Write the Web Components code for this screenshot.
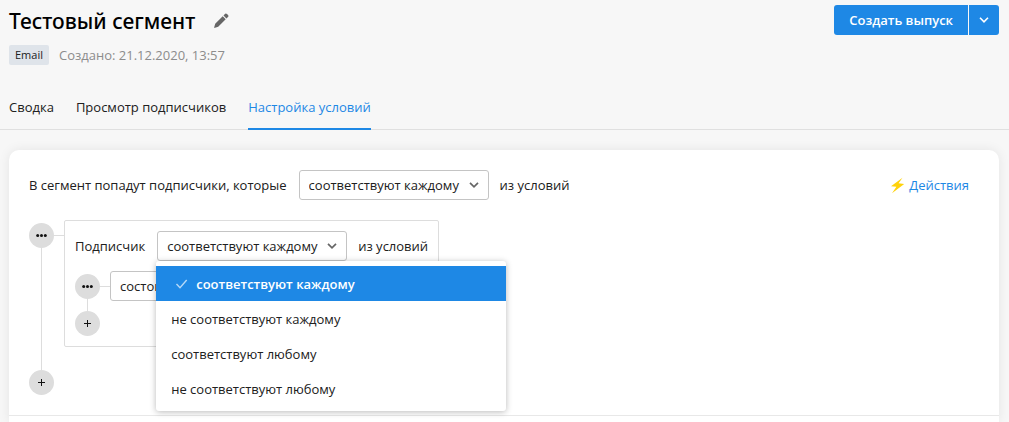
<!DOCTYPE html>
<html lang="ru">
<head>
<meta charset="utf-8">
<meta name="viewport" content="width=device-width, initial-scale=1">
<title>Тестовый сегмент</title>
<style>
html { background: #f7f7f7; }
body {
  margin: 0;
  color: #202020;
  font: 13px/20px "Open Sans", "Noto Sans", sans-serif;
}
</style>
</head>
<body>
<segment-page></segment-page>

<script>
const define = (name, html, setup) => {
  const template = document.createElement('template');
  template.innerHTML = html;
  customElements.define(name, class extends HTMLElement {
    constructor() {
      super();
      this.attachShadow({ mode: 'open' }).append(template.content.cloneNode(true));
    }
    connectedCallback() { if (setup) setup(this, this.shadowRoot); }
  });
};

/* Drop-down; the choices come from the "options" attribute, split by "|" */
define('ui-select', `
<style>
  :host { display: block; }
  label { display: flex; align-items: center; gap: 12px; white-space: nowrap; }
  label span:empty { display: none; }
  .box { position: relative; flex: none; width: 190px; }
  select {
    box-sizing: border-box; display: block; width: 100%; height: 30px; margin: 0;
    padding: 0 20px 0 9px; border: 1px solid #c4c4c4; border-radius: 3px;
    background: #fff; color: inherit; font: inherit; appearance: none; outline: 0;
  }
  svg { position: absolute; right: 10px; top: 11px; pointer-events: none; }
</style>
<label><span></span>
  <div class="box"><select></select>
    <svg width="10" height="8" viewBox="0 0 10 8" fill="none" stroke="#666" stroke-width="1.7"><path d="M1 1.8 5 5.8 9 1.8"/></svg>
    <slot name="menu"></slot>
  </div>
</label>`, (host, root) => {
  root.querySelector('span').textContent = host.getAttribute('label') || '';
  const select = root.querySelector('select');
  if (!host.getAttribute('label')) select.setAttribute('aria-label', host.getAttribute('name'));
  select.replaceChildren(...host.getAttribute('options').split('|').map(t => new Option(t)));
});

define('ui-menu', `
<style>
  :host {
    position: absolute; z-index: 5; top: 30px; left: -1px; box-sizing: border-box;
    width: 350px; padding: 5px 0; background: #fff; border-radius: 3px;
    box-shadow: 0 1px 6px rgba(0,0,0,.28);
  }
</style><slot></slot>`, host => host.setAttribute('role', 'listbox'));

define('ui-option', `
<style>
  :host { display: flex; align-items: center; gap: 8px; height: 35px; padding: 0 15px; }
  :host([selected]) { background: #1e88e5; color: #fff; font-weight: 600; padding: 0 19px; }
  svg { display: none; }
  :host([selected]) svg { display: block; }
</style>
<svg width="13" height="12" viewBox="0 0 13 12" fill="none" stroke="#b5d8f7" stroke-width="1.4"><path d="M1.5 6 5 9.7 11.7 2"/></svg>
<span><slot></slot></span>`, host => host.setAttribute('role', 'option'));

define('round-button', `
<style>
  :host { display: block; flex: none; }
  button {
    display: grid; place-items: center; width: 25px; height: 25px; padding: 0;
    border: 0; border-radius: 50%; background: #ddd; color: #111;
  }
  svg { display: none; }
  :host([kind=more]) .more, :host([kind=add]) .add { display: block; }
</style>
<button type="button">
  <svg class="more" width="11" height="5" viewBox="0 0 11 5" fill="currentColor"><circle cx="1.7" cy="2.5" r="1.5"/><circle cx="5.5" cy="2.5" r="1.5"/><circle cx="9.3" cy="2.5" r="1.5"/></svg>
  <svg class="add" width="7" height="7" viewBox="0 0 7 7" stroke="currentColor"><path d="M3.5 0V7M0 3.5H7"/></svg>
</button>`, (host, root) => root.querySelector('button')
  .setAttribute('aria-label', host.getAttribute('kind') === 'add' ? 'Добавить' : 'Ещё'));

/* A branch: round menu button, connector, slotted content, then an add button */
define('condition-branch', `
<style>
  :host { display: grid; grid-template-columns: 25px 10px max-content; --lead: 3px; --tail: 23px; }
  :host([nested]) { --tail: 10px; }
  .rail { display: flex; flex-direction: column; align-items: center; padding-top: var(--lead); }
  .line { flex: 1; width: 1px; background: #ddd; }
  .link { height: 1px; margin-top: 15px; background: #ddd; }
  .body { padding-bottom: var(--tail); }
</style>
<div class="rail"><round-button kind="more"></round-button><div class="line"></div></div>
<div class="link"></div>
<div class="body"><slot></slot></div>
<round-button kind="add"></round-button>`);

define('condition-group', `
<style>
  :host { display: block; padding: 10px; border: 1px solid #ddd; border-radius: 2px; }
</style><slot></slot>`);

define('page-heading', `
<style>
  :host { display: flex; justify-content: space-between; align-items: flex-start; padding: 5px 10px 0 9px; }
  .title { display: flex; align-items: center; gap: 17px; height: 32px; }
  h1 { margin: 0; font: 500 21px/32px "Noto Sans", "Open Sans", sans-serif; color: #000; }
  .edit { display: block; padding: 0; border: 0; background: none; }
  .edit svg, .create svg { display: block; }
  .meta { display: flex; align-items: center; gap: 10px; margin-top: 8px; color: #8c8c8c; }
  .tag { padding: 0 6px; border-radius: 2px; background: #dfe4ea; color: #202020; font-size: 11px; }
  .create { display: flex; gap: 1px; }
  .create button {
    height: 30px; border: 0; background: #1e88e5; color: #fff; font: inherit; font-weight: 600;
    padding: 0 15px; border-radius: 3px 0 0 3px;
  }
  .create .more { padding: 0 10px; border-radius: 0 3px 3px 0; }
</style>
<div>
  <div class="title"><h1>Тестовый сегмент</h1>
    <button class="edit" type="button" aria-label="Переименовать">
      <svg width="18" height="18" viewBox="0 0 18 18" fill="#666"><path d="M2 16 3.2 11.8 10.7 4.3 13.7 7.3 6.2 14.8ZM11.5 3.5 13.2 1.8Q14 1 15 2L16 3Q17 4 16.2 4.8L14.5 6.5Z"/></svg>
    </button>
  </div>
  <div class="meta"><span class="tag">Email</span><span>Создано: 21.12.2020, 13:57</span></div>
</div>
<div class="create">
  <button type="button">Создать выпуск</button>
  <button class="more" type="button" aria-label="Другие действия">
    <svg width="10" height="8" viewBox="0 0 10 8" fill="none" stroke="#fff" stroke-width="1.6"><path d="M1 1.8 5 5.8 9 1.8"/></svg>
  </button>
</div>`);

define('page-tabs', `
<style>
  :host { display: block; margin-top: 22px; padding-left: 9px; border-bottom: 1px solid #e0e0e0; }
  nav { display: flex; gap: 22px; }
  a { height: 31px; padding-top: 10px; margin-bottom: -1px; border-bottom: 2px solid transparent; color: inherit; text-decoration: none; }
  a[aria-current] { color: #1e88e5; border-color: #1e88e5; }
</style>
<nav><a href="#summary">Сводка</a><a href="#subscribers">Просмотр подписчиков</a><a href="#conditions" aria-current="page">Настройка условий</a></nav>`);

define('segment-card', `
<style>
  :host { display: flex; flex-direction: column; flex: 1; margin: 20px 10px 0 9px; background: #fff; border-radius: 10px 10px 0 0; box-shadow: 0 0 12px rgba(0,0,0,.08); }
  .body { padding: 20px 20px 20px; }
  .row { display: flex; align-items: center; gap: 11px; }
  .top { margin: 0 10px 20px 0; }
  .actions { display: flex; align-items: center; gap: 4px; margin-left: auto; color: #1e88e5; text-decoration: none; }
  .inner { margin-top: 10px; }
  .foot { flex: 1; border-top: 1px solid #e8e8e8; }
</style>
<div class="body">
  <div class="row top">
    <ui-select label="В сегмент попадут подписчики, которые" options="соответствуют каждому|соответствуют любому"></ui-select>
    <span>из условий</span>
    <a class="actions" href="#actions">
      <svg width="15" height="17" viewBox="0 0 15 17" fill="#ffd20a"><path d="M12.5.8 1 9.2 6.4 9.8 2 16.2 14.2 7 8.6 6.3Z"/></svg>
      <span>Действия</span>
    </a>
  </div>
  <condition-branch>
    <condition-group>
      <div class="row">
        <ui-select label="Подписчик" options="соответствуют каждому|не соответствуют каждому|соответствуют любому|не соответствуют любому">
          <ui-menu slot="menu">
            <ui-option selected aria-selected="true">соответствуют каждому</ui-option>
            <ui-option>не соответствуют каждому</ui-option>
            <ui-option>соответствуют любому</ui-option>
            <ui-option>не соответствуют любому</ui-option>
          </ui-menu>
        </ui-select>
        <span>из условий</span>
      </div>
      <condition-branch nested class="inner">
        <ui-select name="Условие" options="состоит"></ui-select>
      </condition-branch>
    </condition-group>
  </condition-branch>
</div>
<div class="foot"></div>`);

define('segment-page', `
<style>
  :host { display: flex; flex-direction: column; min-height: 100vh; }
  main { display: flex; flex-direction: column; flex: 1; }
</style>
<page-heading></page-heading>
<page-tabs></page-tabs>
<main><segment-card></segment-card></main>`);
</script>
</body>
</html>
